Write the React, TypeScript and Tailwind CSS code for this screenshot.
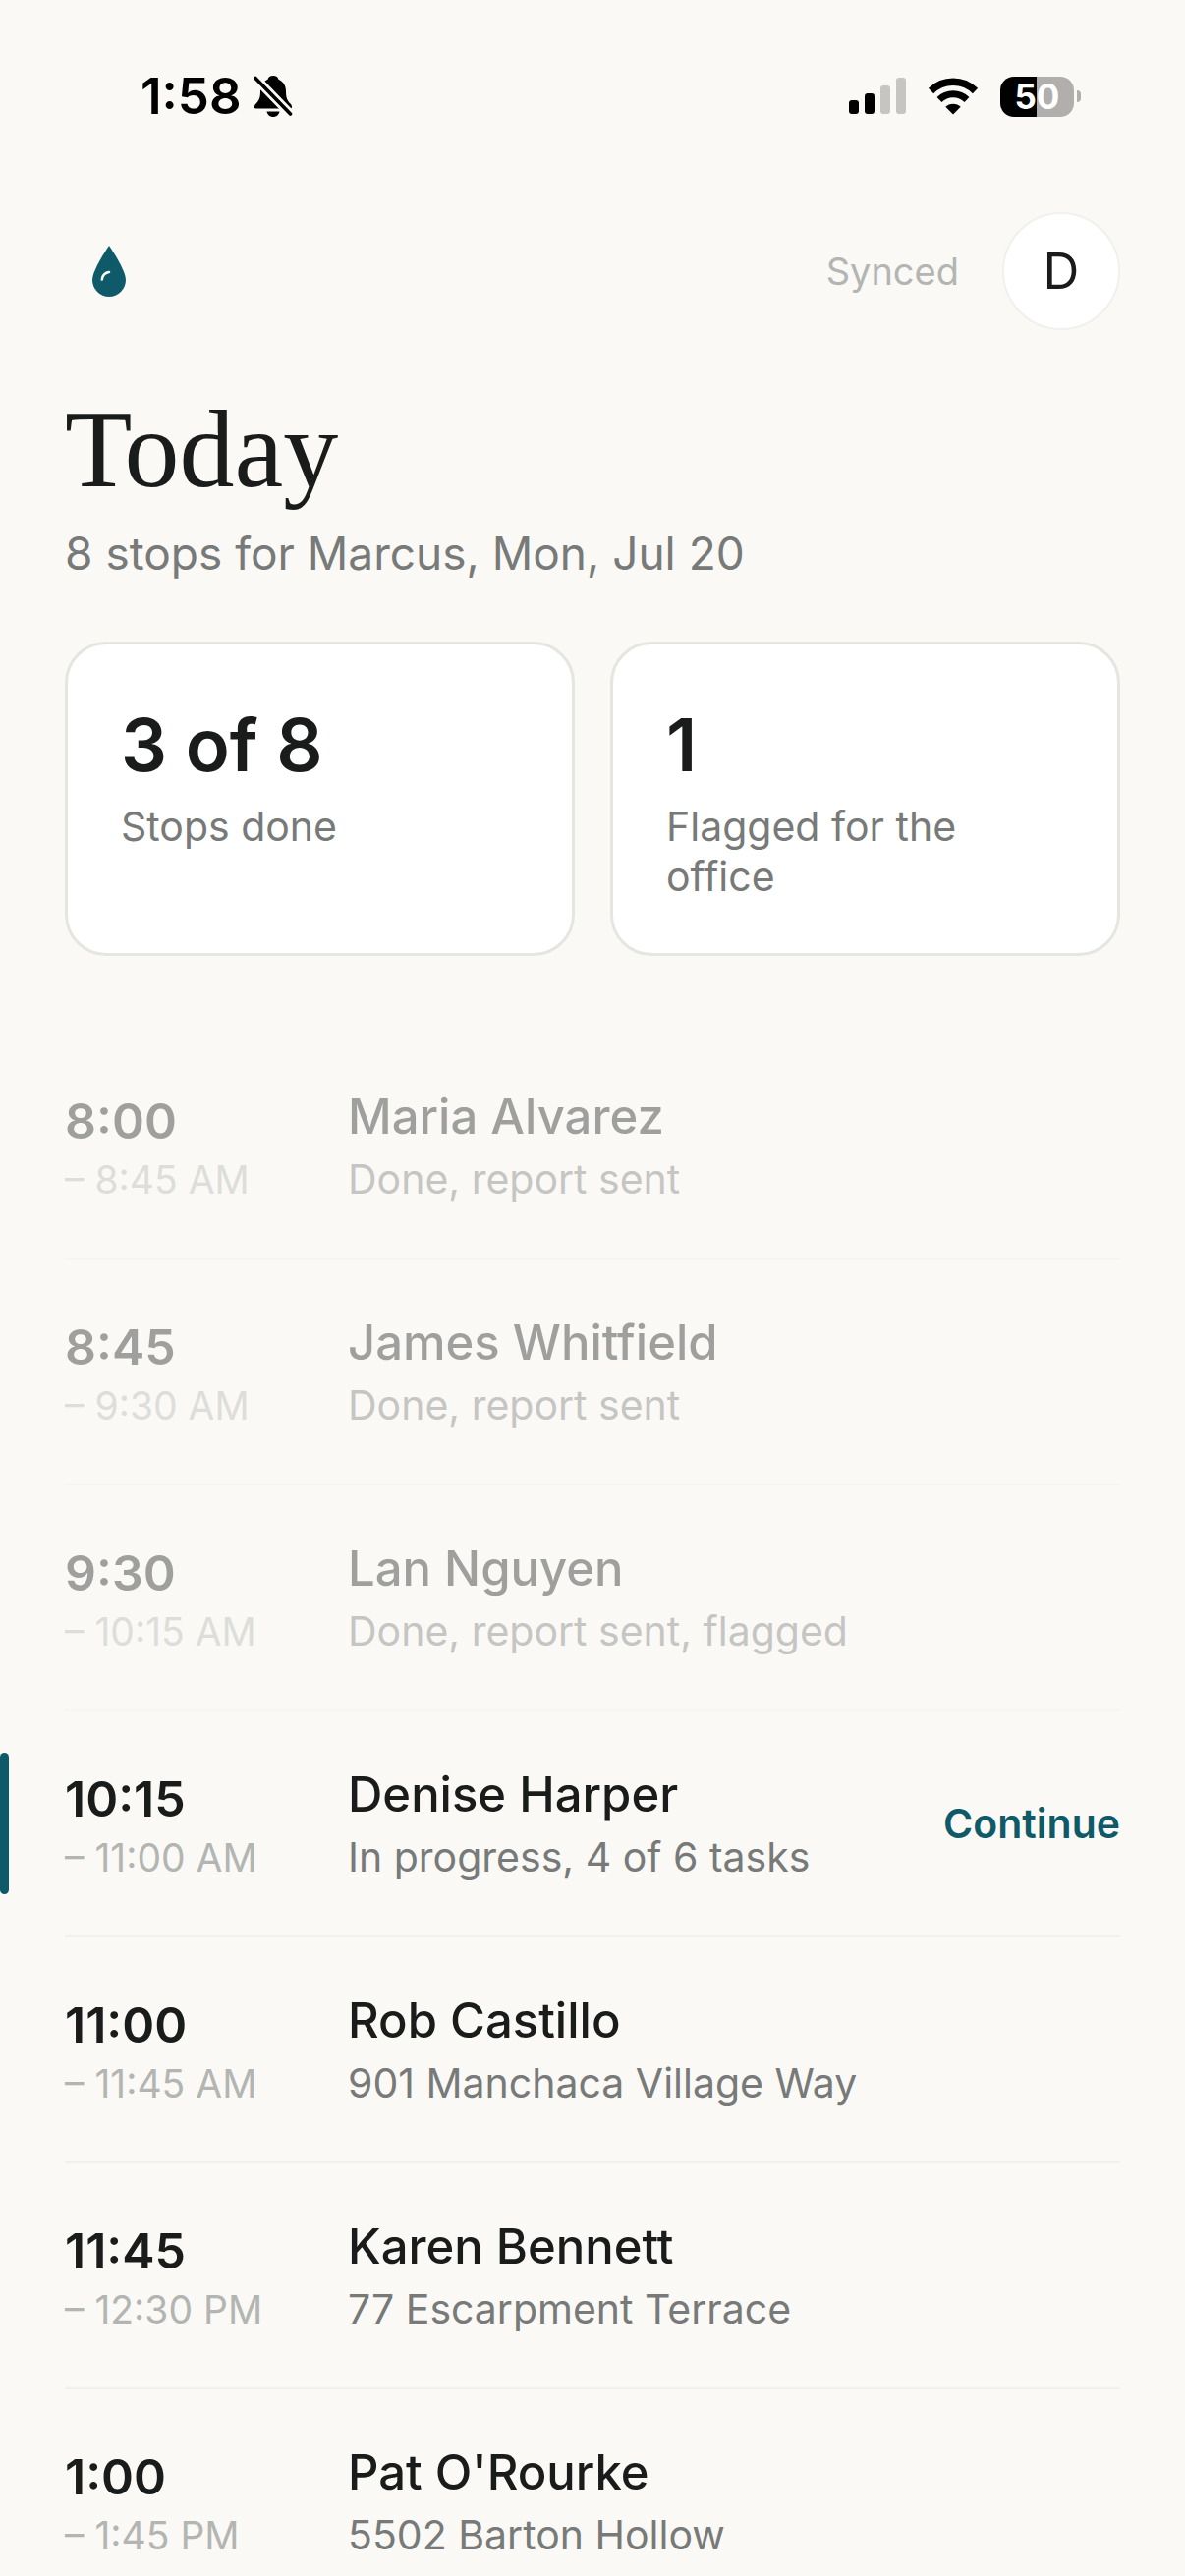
import clsx from "clsx"

type Stop = {
  start: string
  end: string
  name: string
  detail: string
  status: "done" | "active" | "upcoming"
}

const stops: Stop[] = [
  { start: "8:00", end: "8:45 AM", name: "Maria Alvarez", detail: "Done, report sent", status: "done" },
  { start: "8:45", end: "9:30 AM", name: "James Whitfield", detail: "Done, report sent", status: "done" },
  { start: "9:30", end: "10:15 AM", name: "Lan Nguyen", detail: "Done, report sent, flagged", status: "done" },
  { start: "10:15", end: "11:00 AM", name: "Denise Harper", detail: "In progress, 4 of 6 tasks", status: "active" },
  { start: "11:00", end: "11:45 AM", name: "Rob Castillo", detail: "901 Manchaca Village Way", status: "upcoming" },
  { start: "11:45", end: "12:30 PM", name: "Karen Bennett", detail: "77 Escarpment Terrace", status: "upcoming" },
  { start: "1:00", end: "1:45 PM", name: "Pat O'Rourke", detail: "5502 Barton Hollow", status: "upcoming" },
]

function BellOffIcon() {
  return (
    <svg viewBox="0 0 40 46" className="h-[46px] w-10" aria-hidden="true">
      <path
        d="M20 2c-3 0-5 1.600-5.600 4C9.500 8 7 12.500 7 18c0 7-1.500 9.500-4.500 12.500C.5 32.500.2 35.500 2.500 35.500h35c2 0 2-3 0-5C34.500 27.500 33 25 33 18c0-5.500-2.500-10-7.400-12C25 3.600 23 2 20 2z"
        fill="black"
      />
      <path d="M13.500 38.500h13c-.7 3.300-3.200 5.500-6.500 5.500s-5.800-2.200-6.500-5.500z" fill="black" />
      <path d="M2 4.500 37.500 41" stroke="#faf9f6" strokeWidth="9" />
      <path d="M2 4.500 37.500 41" stroke="black" strokeWidth="3.600" strokeLinecap="round" />
    </svg>
  )
}

function SignalIcon() {
  return (
    <svg viewBox="0 0 58 38" className="h-[38px] w-[58px]" aria-hidden="true">
      <rect x="0" y="23" width="10" height="14" rx="3" fill="black" />
      <rect x="16" y="16" width="10" height="21" rx="3" fill="black" />
      <rect x="32" y="8" width="10" height="29" rx="3" fill="#c6c5c2" />
      <rect x="48" y="0" width="10" height="37" rx="3" fill="#c6c5c2" />
    </svg>
  )
}

function WifiIcon() {
  return (
    <svg viewBox="0 0 52 38" className="h-[38px] w-[52px]" aria-hidden="true">
      <path d="M3.500 13.500a32 32 0 0 1 45 0" fill="none" stroke="black" strokeWidth="7.500" />
      <path d="M12 22.500a20 20 0 0 1 28 0" fill="none" stroke="black" strokeWidth="7" />
      <path d="M26 37.500 18.300 29.800a11 11 0 0 1 15.400 0z" fill="black" />
    </svg>
  )
}

function StatusBar() {
  return (
    <div className="flex h-[84px] items-center justify-between pr-[106px] pl-[143px] text-black">
      <div className="flex items-center gap-3">
        <span className="text-[51px] leading-[60px] font-semibold">1:58</span>
        <BellOffIcon />
      </div>
      <div className="flex items-center gap-[22px]">
        <SignalIcon />
        <WifiIcon />
        <div className="flex items-center gap-[3px]">
          <span className="flex h-[41px] w-[75px] items-center justify-center rounded-[14px] bg-linear-to-r from-black from-50% to-[#b0afad] to-50% text-[35px] leading-[41px] font-bold text-white">
            50
          </span>
          <span className="h-3 w-1 rounded-r-full bg-[#b0afad]" />
        </div>
      </div>
    </div>
  )
}

function DropLogo() {
  return (
    <svg viewBox="0 0 34 52" className="h-[52px] w-[34px]" aria-hidden="true">
      <path d="M17 0C17 0 0 24.500 0 35a17 17 0 0 0 34 0C34 24.500 17 0 17 0z" fill="#0f5a68" />
      <path d="M9.800 34.500a8 8 0 0 1 7.200-7.500" fill="none" stroke="white" strokeWidth="2.600" strokeLinecap="round" />
    </svg>
  )
}

function StatCard({ value, label }: { value: string; label: string }) {
  return (
    <div className="rounded-[42px] border-[3px] border-[#e6e6e1] bg-white px-[54px] pt-[60px] pb-[52px]">
      <div className="text-[74px] leading-[84px] font-semibold">{value}</div>
      <div className="mt-4 text-[41px] leading-[51px] text-[#777a78]">{label}</div>
    </div>
  )
}

function StopRow({ stop }: { stop: Stop }) {
  return (
    <li
      className={clsx(
        "relative flex min-h-[230px] items-center border-b-2 border-[#f0f0ec]",
        stop.status === "done" && "opacity-40"
      )}
    >
      {stop.status === "active" && (
        <span className="absolute inset-y-[42px] -left-[66px] w-[9px] rounded-[5px] bg-[#0f5a68]" />
      )}
      <div className="w-72 shrink-0 pt-1">
        <div className="text-[50px] leading-[60px] font-semibold">{stop.start}</div>
        <div className="mt-1.5 text-[39px] leading-[48px] text-[#b3b5b2]">– {stop.end}</div>
      </div>
      <div className="min-w-0 flex-1">
        <div className="text-[49px] leading-[60px] font-medium">{stop.name}</div>
        <div className="mt-2 text-[41px] leading-[51px] text-[#777a78]">{stop.detail}</div>
      </div>
      {stop.status === "active" && (
        <button type="button" className="text-[41px] leading-[51px] font-semibold text-[#0f5a68]">
          Continue
        </button>
      )}
    </li>
  )
}

export default function App() {
  return (
    <div className="h-screen overflow-y-auto bg-[#faf9f6] pt-14 font-['Inter',sans-serif] text-[#1a1c1b] [scrollbar-width:none]">
      <StatusBar />
      <main className="mt-[76px] px-[66px]">
        <header className="flex items-center justify-between pl-7">
          <DropLogo />
          <div className="flex items-center gap-11">
            <span className="text-[38px] leading-[48px] text-[#b3b5b2]">Synced</span>
            <button
              type="button"
              aria-label="Account"
              className="size-[120px] rounded-full border-2 border-[#f0f0ec] bg-white text-[51px]"
            >
              D
            </button>
          </div>
        </header>

        <h1 className="mt-[61px] font-['Liberation_Serif',serif] text-[112px] leading-[120px]">Today</h1>
        <p className="mt-4 text-[46px] leading-[60px] text-[#777a78]">8 stops for Marcus, Mon, Jul 20</p>

        <section className="mt-[60px] grid grid-cols-2 gap-9">
          <StatCard value="3 of 8" label="Stops done" />
          <StatCard value="1" label="Flagged for the office" />
        </section>

        <ul className="mt-[79px]">
          {stops.map((stop) => (
            <StopRow key={stop.start} stop={stop} />
          ))}
        </ul>
      </main>
    </div>
  )
}
